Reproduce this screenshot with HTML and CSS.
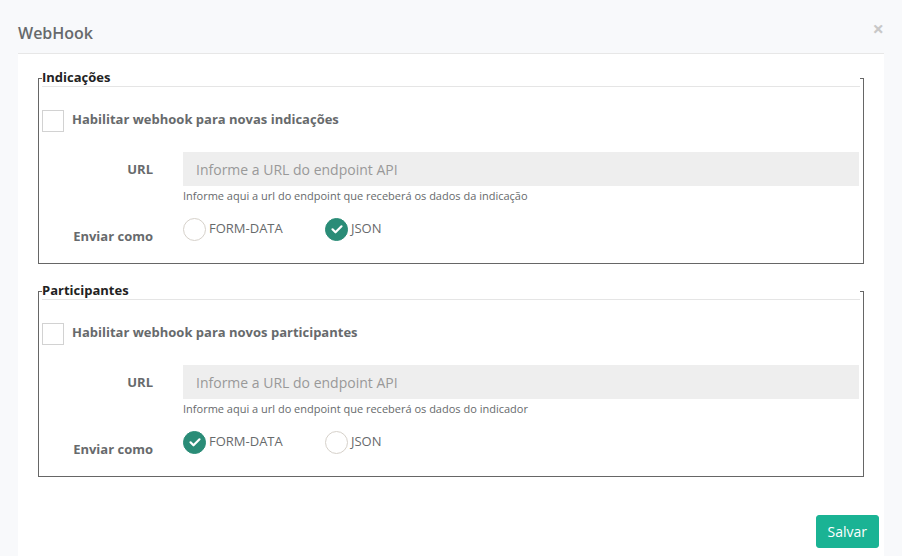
FILE: index.html
```html
<!DOCTYPE html>
<html lang="pt">
<head>
    <meta charset="UTF-8">
    <title>WebHook</title>
    <link rel="stylesheet" href="styles.css">
</head>
<body>
    <div class="modal">
        <div class="modal-header">
            <h4 class="modal-title">WebHook</h4>
            <span class="close">&times;</span>
        </div>
        <div class="modal-body">
            <fieldset class="group">
                <legend>Indicações</legend>
                <div class="check-row">
                    <span class="checkbox"></span>
                    <span class="check-label">Habilitar webhook para novas indicações</span>
                </div>
                <div class="row">
                    <label class="lbl">URL</label>
                    <div class="field">
                        <input type="text" class="input" placeholder="Informe a URL do endpoint API" disabled>
                        <div class="help">Informe aqui a url do endpoint que receberá os dados da indicação</div>
                    </div>
                </div>
                <div class="row radio-row">
                    <label class="lbl">Enviar como</label>
                    <div class="radios">
                        <div class="radio"><span class="circle"></span>FORM-DATA</div>
                        <div class="radio"><span class="circle checked"><svg viewBox="0 0 22 22" width="22" height="22"><path d="M6.5 11.3l3 3 6-6" fill="none" stroke="#fff" stroke-width="2.2" stroke-linecap="round" stroke-linejoin="round"/></svg></span>JSON</div>
                    </div>
                </div>
            </fieldset>

            <fieldset class="group">
                <legend>Participantes</legend>
                <div class="check-row">
                    <span class="checkbox"></span>
                    <span class="check-label">Habilitar webhook para novos participantes</span>
                </div>
                <div class="row">
                    <label class="lbl">URL</label>
                    <div class="field">
                        <input type="text" class="input" placeholder="Informe a URL do endpoint API" disabled>
                        <div class="help">Informe aqui a url do endpoint que receberá os dados do indicador</div>
                    </div>
                </div>
                <div class="row radio-row">
                    <label class="lbl">Enviar como</label>
                    <div class="radios">
                        <div class="radio"><span class="circle checked"><svg viewBox="0 0 22 22" width="22" height="22"><path d="M6.5 11.3l3 3 6-6" fill="none" stroke="#fff" stroke-width="2.2" stroke-linecap="round" stroke-linejoin="round"/></svg></span>FORM-DATA</div>
                        <div class="radio"><span class="circle"></span>JSON</div>
                    </div>
                </div>
            </fieldset>

            <div class="footer">
                <button type="button" class="btn-primary">Salvar</button>
            </div>
        </div>
    </div>
</body>
</html>
```

FILE: styles.css
```css
body {
    margin: 0;
    background: #f8f9fb;
    font-family: 'Open Sans', 'Noto Sans', sans-serif;
    color: #676a6c;
    font-size: 13px;
}

.modal {
    margin: 0 18px;
}

.modal-header {
    height: 53px;
    border-bottom: 1px solid #e7e7e7;
    display: flex;
    align-items: center;
    justify-content: space-between;
}

.modal-title {
    margin: 12px 0 0 0;
    font-size: 16px;
    font-weight: 600;
    color: #676a6c;
}

.close {
    font-size: 20px;
    font-weight: 700;
    color: #c8c8c8;
    margin: 4px 0 0 0;
    line-height: 1;
}

.modal-body {
    background: #fff;
    padding: 15px 20px 20px 20px;
    min-height: 480px;
}

.group {
    border: 1px solid #666;
    margin: 0 0 18px 0;
    padding: 0 3px 17px 3px;
}

.group legend {
    width: 100%;
    padding: 0;
    font-size: 13px;
    font-weight: 700;
    color: #222;
    line-height: 17px;
    border-bottom: 1px solid #e5e5e5;
}

.check-row {
    display: flex;
    align-items: center;
    margin-top: 23px;
}

.checkbox {
    width: 20px;
    height: 20px;
    border: 1px solid #d2d2d2;
    display: inline-block;
}

.check-label {
    margin-left: 8px;
    margin-bottom: 4px;
    font-size: 13px;
    font-weight: 700;
    color: #676a6c;
}

.row {
    display: flex;
    align-items: flex-start;
    margin-top: 20px;
}

.lbl {
    width: 111px;
    margin-right: 30px;
    text-align: right;
    font-weight: 700;
    padding-top: 7px;
    line-height: 20px;
}

.field {
    flex: 1;
    margin-right: 1px;
}

.input {
    display: block;
    width: 100%;
    height: 34px;
    box-sizing: border-box;
    border: 1px solid #eee;
    background: #eee;
    padding: 6px 12px;
    font-family: inherit;
    font-size: 14px;
}

.input::placeholder {
    color: #999;
}

.help {
    font-size: 11px;
    margin-top: 2px;
    line-height: 15px;
    color: #676a6c;
}

.radio-row {
    margin-top: 15px;
}

.radio-row .lbl {
    padding-top: 8px;
}

.radios {
    display: flex;
}

.radio {
    width: 142px;
    display: flex;
    align-items: flex-start;
    line-height: 20px;
    font-size: 13px;
}

.circle {
    width: 23px;
    height: 23px;
    box-sizing: border-box;
    border: 1px solid #d6d1ca;
    border-radius: 50%;
    margin-right: 3px;
    display: inline-block;
}

.circle.checked {
    background: #2a8c77;
    border-color: #2a8c77;
}

.circle svg {
    display: block;
    margin: -1px 0 0 -0.5px;
}

.footer {
    display: flex;
    justify-content: flex-end;
    margin-top: 38px;
    margin-right: -15px;
}

.btn-primary {
    background: #1ab394;
    border: 1px solid #1ab394;
    color: #fff;
    font-family: inherit;
    font-size: 14px;
    border-radius: 3px;
    padding: 6px 11px;
    height: 33px;
}
```
